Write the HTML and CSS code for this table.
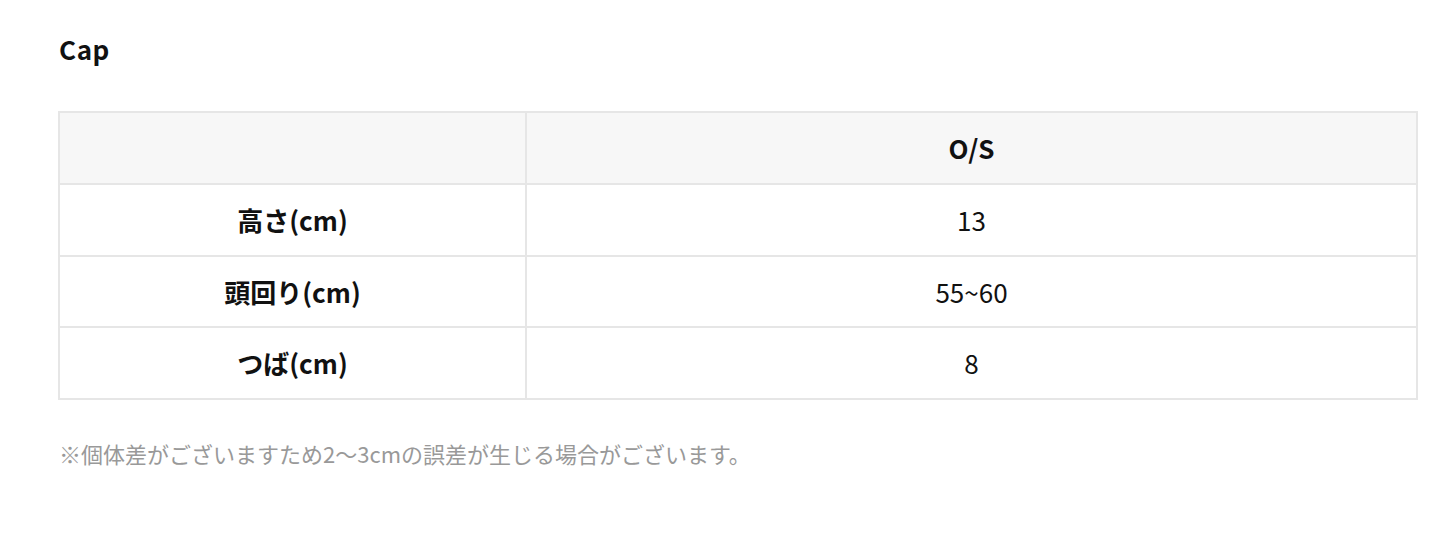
FILE: index.html
```html
<!DOCTYPE html>
<html lang="ja">
<head>
<meta charset="utf-8">
<link rel="stylesheet" href="styles.css">
</head>
<body>
<div class="page">
  <h2 class="title">Cap</h2>
  <table class="size-table">
    <colgroup><col class="c1"><col class="c2"></colgroup>
    <thead>
      <tr><th class="blank"></th><th>O/S</th></tr>
    </thead>
    <tbody>
      <tr><th>高さ(cm)</th><td>13</td></tr>
      <tr><th>頭回り(cm)</th><td>55~60</td></tr>
      <tr><th>つば(cm)</th><td>8</td></tr>
    </tbody>
  </table>
  <p class="note">※個体差がございますため2〜3cmの誤差が生じる場合がございます。</p>
</div>
</body>
</html>
```

FILE: styles.css
```css
html, body {
  margin: 0;
  padding: 0;
  background: #fff;
}
body {
  font-family: "Noto Sans CJK JP", "Noto Sans", sans-serif;
  color: #111;
}
.page {
  padding: 29px 32px 0 58px;
}
.title {
  margin: 0 0 42px 1px;
  font-size: 26px;
  font-weight: 700;
  line-height: 40px;
  letter-spacing: 0.6px;
}
.size-table {
  width: 1360px;
  border-collapse: collapse;
  table-layout: fixed;
}
.c1 { width: 467px; }
.size-table th,
.size-table td {
  border: 2px solid #e6e6e6;
  height: 69.6px;
  padding: 0;
  text-align: center;
  vertical-align: middle;
  font-size: 26px;
  line-height: 1.2;
}
.size-table th { font-weight: 700; }
.size-table td { font-weight: 400; }
.size-table thead th {
  background: #f7f7f7;
  height: 70px;
}
.note {
  margin: 37px 0 0 1px;
  font-size: 22px;
  color: #999;
  line-height: 32px;
}
```
